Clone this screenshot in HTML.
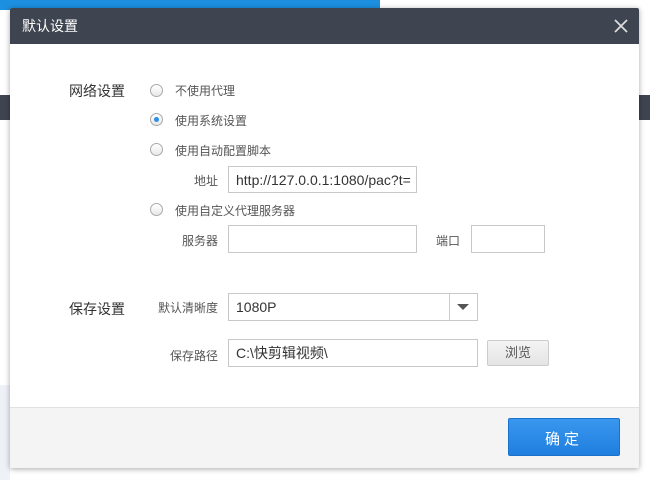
<!DOCTYPE html>
<html><head><meta charset="utf-8"><style>
body{margin:0;width:650px;height:480px;position:relative;overflow:hidden;background:#fff;font-family:"Liberation Sans","Noto Sans CJK SC",sans-serif;}
.abs{position:absolute}
.dlg{left:10px;top:8px;width:629px;height:460px;background:#fff;box-shadow:0 1px 6px rgba(0,0,0,.35);border-radius:2px;overflow:hidden}
.title{left:0;top:0;width:629px;height:36px;background:#3e4450;color:#fff;font-size:14px;line-height:36px;text-indent:12px}
.lbl{font-size:14px;color:#333}
.sm{font-size:12px;color:#555}
.radio{width:13px;height:13px;border:1px solid #aaa;border-radius:50%;background:linear-gradient(#fff,#e8e8e8);box-sizing:border-box}
.inp{border:1px solid #c8c8c8;background:#fff;box-sizing:border-box;font-size:14px;color:#333;line-height:26px;padding-left:7px;overflow:hidden;white-space:nowrap}
</style></head><body>
<div class="abs" style="left:0;top:0;width:380px;height:10px;background:#1c8fe0"></div>
<div class="abs" style="left:0;top:95px;width:10px;height:25px;background:#3e4450"></div>
<div class="abs" style="left:639px;top:95px;width:11px;height:25px;background:#3e4450"></div>
<div class="abs" style="left:0;top:385px;width:10px;height:95px;background:#eef2f8"></div>
<div class="abs dlg">
 <div class="abs title">默认设置</div>
 <svg class="abs" style="left:603px;top:10px" width="16" height="16"><path d="M2 2L14 14M14 2L2 14" stroke="#ddd" stroke-width="1.8"/></svg>
 <div class="abs lbl" style="left:59px;top:73px">网络设置</div>
 <div class="abs radio" style="left:140px;top:76px"></div><div class="abs sm" style="left:165px;top:74px">不使用代理</div>
 <div class="abs radio" style="left:140px;top:105px"></div><div class="abs" style="left:144px;top:109px;width:5px;height:5px;border-radius:50%;background:#2e8ee8"></div><div class="abs sm" style="left:165px;top:104px">使用系统设置</div>
 <div class="abs radio" style="left:140px;top:135px"></div><div class="abs sm" style="left:165px;top:134px">使用自动配置脚本</div>
 <div class="abs sm" style="left:184px;top:164px">地址</div>
 <div class="abs inp" style="left:218px;top:158px;width:189px;height:27px">http://127.0.0.1:1080/pac?t=</div>
 <div class="abs radio" style="left:140px;top:195px"></div><div class="abs sm" style="left:165px;top:194px">使用自定义代理服务器</div>
 <div class="abs sm" style="left:172px;top:224px">服务器</div>
 <div class="abs inp" style="left:218px;top:217px;width:189px;height:28px"></div>
 <div class="abs sm" style="left:426px;top:224px">端口</div>
 <div class="abs inp" style="left:461px;top:217px;width:74px;height:28px"></div>
 <div class="abs lbl" style="left:59px;top:291px">保存设置</div>
 <div class="abs sm" style="left:148px;top:291px">默认清晰度</div>
 <div class="abs inp" style="left:218px;top:285px;width:250px;height:28px">1080P</div>
 <div class="abs" style="left:439px;top:286px;width:1px;height:26px;background:#ccc"></div>
 <svg class="abs" style="left:446px;top:295px" width="14" height="8"><path d="M1 1L13 1L7 7Z" fill="#555"/></svg>
 <div class="abs sm" style="left:160px;top:339px">保存路径</div>
 <div class="abs inp" style="left:218px;top:331px;width:250px;height:28px">C:\快剪辑视频\</div>
 <div class="abs" style="left:477px;top:332px;width:62px;height:26px;border:1px solid #ccc;border-radius:2px;background:linear-gradient(#f4f4f4,#e4e4e4);box-sizing:border-box;text-align:center;font-size:13px;line-height:24px;color:#555">浏览</div>
 <div class="abs" style="left:0;top:399px;width:629px;height:61px;background:#f4f4f4;border-top:1px solid #e2e2e2"></div>
 <div class="abs" style="left:498px;top:410px;width:112px;height:38px;background:linear-gradient(#3a97ee,#1f7fdf);border:1px solid #1a72cc;border-radius:2px;box-sizing:border-box;color:#fff;text-align:center;line-height:41px;font-size:15px;letter-spacing:4px">确定</div>
</div>
</body></html>
